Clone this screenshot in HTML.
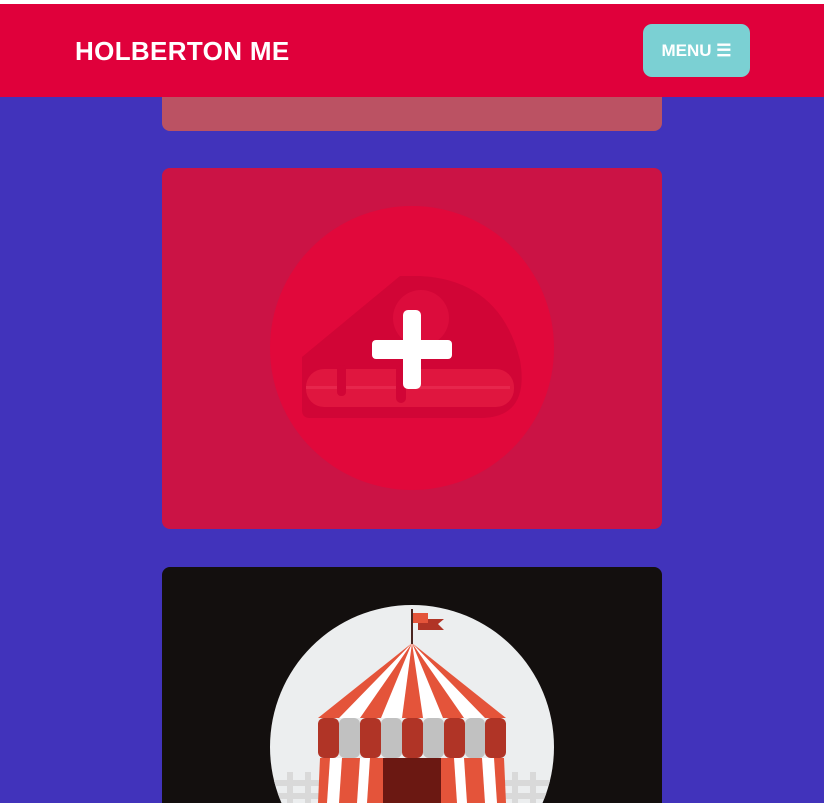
<!DOCTYPE html>
<html><head><style>
html,body{margin:0;padding:0;overflow:hidden;width:824px;height:803px}
body{background:#4133bb;position:relative;font-family:"Liberation Sans",sans-serif}
.top{position:absolute;left:0;top:0;width:824px;height:4px;background:#fff}
.hdr{position:absolute;left:0;top:4px;width:824px;height:93px;background:#e0003b;z-index:2}
.logo{position:absolute;left:75px;top:32px;color:#fff;font-weight:bold;font-size:26px;letter-spacing:0.35px}
.btn{position:absolute;left:643px;top:20px;width:107px;height:53px;border-radius:9px;background:#7bd0d3;color:#fff;font-weight:bold;font-size:17px;line-height:53px;text-align:center}
.c1{position:absolute;left:162px;top:60px;width:500px;height:71px;background:#bb5263;border-radius:8px}
.c2{position:absolute;left:162px;top:168px;width:500px;height:361px;background:#cb1345;border-radius:8px}
.c3{position:absolute;left:162px;top:567px;width:500px;height:236px;background:#130f0e;border-radius:8px 8px 0 0}
svg{position:absolute;left:0;top:0}
</style></head><body>
<div class="top"></div>
<div class="c1"></div>
<div class="c2"></div>
<div class="c3"></div>
<svg width="824" height="803" viewBox="0 0 824 803">
 <circle cx="412" cy="348" r="142" fill="#e1083b"/>
 <path d="M302 357 L400 276 L420 276 Q500 280 520 360 Q530 418 480 418 L310 418 Q302 418 302 410 Z" fill="#d10536"/>
 <rect x="306" y="369" width="208" height="38" rx="18" fill="#e0163f"/>
 <rect x="306" y="386" width="204" height="3" fill="#e7264c"/>
 <circle cx="421" cy="318" r="28" fill="#dc0c3c"/>
 <rect x="337" y="365" width="9" height="31" rx="4" fill="#d10536"/>
 <rect x="396" y="365" width="10" height="38" rx="5" fill="#d10536"/>
 <rect x="372" y="340" width="80" height="19" rx="4" fill="#fff"/>
 <rect x="403" y="310" width="18" height="79" rx="5" fill="#fff"/>
 <clipPath id="cc"><circle cx="412" cy="747" r="142"/></clipPath>
 <circle cx="412" cy="747" r="142" fill="#eceeef"/>
 <g clip-path="url(#cc)">
  <g fill="#d9d9d9">
   <rect x="270" y="780" width="284" height="6"/>
   <rect x="270" y="793" width="284" height="6"/>
   <rect x="287" y="772" width="6" height="31"/><rect x="305" y="772" width="6" height="31"/>
   <rect x="512" y="772" width="6" height="31"/><rect x="530" y="772" width="6" height="31"/>
  </g>
  <rect x="320" y="758" width="184" height="45" fill="#fff"/>
  <g fill="#e4543a">
   <path d="M320 758 L330 758 L327 803 L318 803Z"/>
   <path d="M342 758 L360 758 L357 803 L339 803Z"/>
   <path d="M370 758 L385 758 L384 803 L367 803Z"/>
   <path d="M439 758 L454 758 L457 803 L440 803Z"/>
   <path d="M464 758 L482 758 L485 803 L467 803Z"/>
   <path d="M494 758 L504 758 L506 803 L497 803Z"/>
  </g>
  <rect x="383" y="758" width="58" height="45" fill="#6b1812"/>
 </g>
 <g>
  <path d="M412 643 L318 718 L506 718 Z" fill="#fff"/>
  <g fill="#e4543a">
   <path d="M412 643 L318 718 L339 718Z"/>
   <path d="M412 643 L360 718 L381 718Z"/>
   <path d="M412 643 L402 718 L423 718Z"/>
   <path d="M412 643 L443 718 L464 718Z"/>
   <path d="M412 643 L485 718 L506 718Z"/>
  </g>
  <g>
   <rect x="318" y="718" width="21" height="40" rx="6" fill="#b03426"/>
   <rect x="339" y="718" width="21" height="40" rx="6" fill="#c1c1c1"/>
   <rect x="360" y="718" width="21" height="40" rx="6" fill="#b03426"/>
   <rect x="381" y="718" width="21" height="40" rx="6" fill="#c1c1c1"/>
   <rect x="402" y="718" width="21" height="40" rx="6" fill="#b03426"/>
   <rect x="423" y="718" width="21" height="40" rx="6" fill="#c1c1c1"/>
   <rect x="444" y="718" width="21" height="40" rx="6" fill="#b03426"/>
   <rect x="465" y="718" width="20" height="40" rx="6" fill="#c1c1c1"/>
   <rect x="485" y="718" width="21" height="40" rx="6" fill="#b03426"/>
  </g>
  <rect x="411" y="609" width="2" height="35" fill="#4a2520"/>
  <path d="M418 619 L444 619 L438 624 L444 630 L418 630Z" fill="#b03426"/>
  <rect x="413" y="613" width="15" height="10" fill="#e4543a"/>
 </g>
</svg>
<div class="hdr">
 <div class="logo">HOLBERTON ME</div>
 <div class="btn">MENU &#9776;</div>
</div>
</body></html>
